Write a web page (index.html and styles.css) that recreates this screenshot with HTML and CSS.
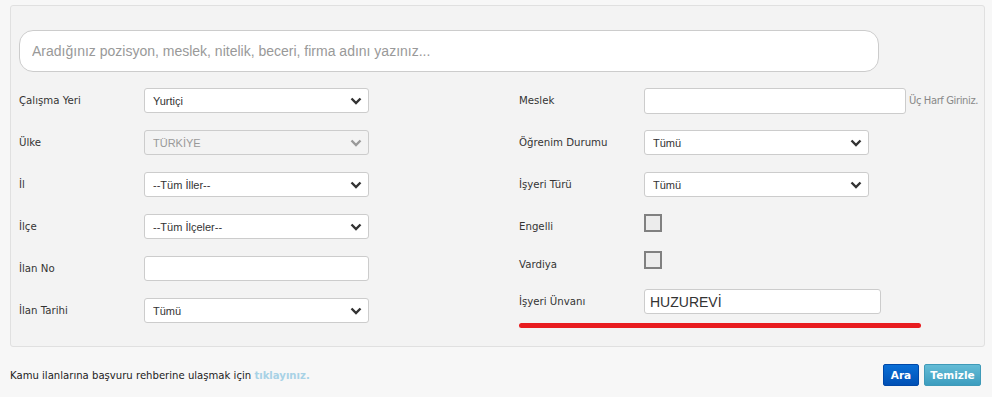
FILE: index.html
```html
<!DOCTYPE html>
<html lang="tr">
<head>
    <meta charset="UTF-8">
    <title>İş İlanları Arama</title>
    <link rel="stylesheet" href="styles.css">
</head>
<body>
    <div class="panel">
        <input class="search" type="text" placeholder="Aradığınız pozisyon, meslek, nitelik, beceri, firma adını yazınız...">

        <div class="form-grid">
            <div class="column">
                <div class="row">
                    <label>Çalışma Yeri</label>
                    <div class="select-wrap">
                        <select><option>Yurtiçi</option></select>
                        <svg class="chevron" viewBox="0 0 12 8"><polyline points="1.5,1.5 6,6 10.5,1.5"/></svg>
                    </div>
                </div>
                <div class="row">
                    <label>Ülke</label>
                    <div class="select-wrap disabled">
                        <select disabled><option>TÜRKİYE</option></select>
                        <svg class="chevron" viewBox="0 0 12 8"><polyline points="1.5,1.5 6,6 10.5,1.5"/></svg>
                    </div>
                </div>
                <div class="row">
                    <label>İl</label>
                    <div class="select-wrap">
                        <select><option>--Tüm İller--</option></select>
                        <svg class="chevron" viewBox="0 0 12 8"><polyline points="1.5,1.5 6,6 10.5,1.5"/></svg>
                    </div>
                </div>
                <div class="row">
                    <label>İlçe</label>
                    <div class="select-wrap">
                        <select><option>--Tüm İlçeler--</option></select>
                        <svg class="chevron" viewBox="0 0 12 8"><polyline points="1.5,1.5 6,6 10.5,1.5"/></svg>
                    </div>
                </div>
                <div class="row">
                    <label>İlan No</label>
                    <input class="text-input" type="text">
                </div>
                <div class="row">
                    <label>İlan Tarihi</label>
                    <div class="select-wrap">
                        <select><option>Tümü</option></select>
                        <svg class="chevron" viewBox="0 0 12 8"><polyline points="1.5,1.5 6,6 10.5,1.5"/></svg>
                    </div>
                </div>
            </div>

            <div class="column">
                <div class="row">
                    <label>Meslek</label>
                    <input class="text-input meslek" type="text">
                    <span class="hint">Üç Harf Giriniz.</span>
                </div>
                <div class="row">
                    <label>Öğrenim Durumu</label>
                    <div class="select-wrap">
                        <select><option>Tümü</option></select>
                        <svg class="chevron" viewBox="0 0 12 8"><polyline points="1.5,1.5 6,6 10.5,1.5"/></svg>
                    </div>
                </div>
                <div class="row">
                    <label>İşyeri Türü</label>
                    <div class="select-wrap">
                        <select><option>Tümü</option></select>
                        <svg class="chevron" viewBox="0 0 12 8"><polyline points="1.5,1.5 6,6 10.5,1.5"/></svg>
                    </div>
                </div>
                <div class="row check-row">
                    <label>Engelli</label>
                    <span class="checkbox"></span>
                </div>
                <div class="row check-row vardiya">
                    <label>Vardiya</label>
                    <span class="checkbox"></span>
                </div>
                <div class="row unvan">
                    <label>İşyeri Ünvanı</label>
                    <input class="text-input unvan-input" type="text" value="HUZUREVİ">
                </div>
                <div class="red-line"></div>
            </div>
        </div>
    </div>

    <div class="footer">
        <p class="guide">Kamu ilanlarına başvuru rehberine ulaşmak için <a href="#">tıklayınız.</a></p>
        <div class="buttons">
            <button class="btn btn-search">Ara</button>
            <button class="btn btn-clear">Temizle</button>
        </div>
    </div>
</body>
</html>
```

FILE: styles.css
```css
body {
    margin: 0;
    background-color: #f7f7f7;
    font-family: 'DejaVu Sans', Verdana, sans-serif;
    font-size: 11px;
    color: #333;
}

.panel {
    margin: 5px 7px 0 10px;
    padding: 24px 8px 18px 8px;
    background-color: #f3f3f3;
    border: 1px solid #e0e0e0;
    border-radius: 3px;
}

.search {
    display: block;
    box-sizing: border-box;
    width: 860px;
    height: 42px;
    padding: 0 12px;
    border: 1px solid #cccccc;
    border-radius: 14px;
    background: white;
    font-family: 'Liberation Sans', Arial, sans-serif;
    font-size: 14px;
    color: #333;
    outline: none;
}

.search::placeholder {
    color: #999;
}

.form-grid {
    display: grid;
    grid-template-columns: 500px 1fr;
    margin-top: 16px;
}

.column {
    display: flex;
    flex-direction: column;
    gap: 17px;
}

.row {
    display: flex;
    align-items: center;
    height: 25px;
}

.row label {
    width: 125px;
    flex-shrink: 0;
    font-size: 10.2px;
    color: #333;
}

.select-wrap {
    position: relative;
    width: 225px;
    height: 25px;
}

.select-wrap select {
    appearance: none;
    -webkit-appearance: none;
    box-sizing: border-box;
    width: 100%;
    height: 100%;
    padding: 0 8px;
    border: 1px solid #cccccc;
    border-radius: 3px;
    background: white;
    font-family: 'Liberation Sans', Arial, sans-serif;
    font-size: 11px;
    color: #333;
}

.select-wrap.disabled select {
    background: #f3f3f3;
    color: #999;
    opacity: 1;
}

.chevron {
    position: absolute;
    right: 7px;
    top: 9px;
    width: 12px;
    height: 8px;
    fill: none;
    stroke: #333;
    stroke-width: 2.4;
    pointer-events: none;
}

.select-wrap.disabled .chevron {
    stroke: #999;
}

.text-input {
    box-sizing: border-box;
    width: 225px;
    height: 25px;
    padding: 0 5px;
    border: 1px solid #cccccc;
    border-radius: 3px;
    background: white;
    font-family: 'Liberation Sans', Arial, sans-serif;
    font-size: 14px;
    color: #333;
}

.text-input.meslek {
    width: 262px;
    height: 26px;
}

.hint {
    margin-left: 3px;
    font-size: 10px;
    color: #888;
    letter-spacing: -0.4px;
    white-space: nowrap;
}

.check-row {
    height: 18px;
}

.check-row label {
    margin-top: 7px;
}

.check-row.vardiya {
    margin-top: 2px;
}

.check-row.vardiya label {
    margin-top: 9px;
}

.checkbox {
    box-sizing: border-box;
    width: 18px;
    height: 18px;
    border: 2px solid #808080;
    background: #ececec;
}

.unvan {
    margin-top: 3px;
}

.unvan-input {
    width: 237px;
}

.red-line {
    width: 402px;
    height: 5px;
    margin-top: -8px;
    border-radius: 3px;
    background-color: #e81c1f;
}

.footer {
    display: flex;
    justify-content: space-between;
    align-items: center;
    margin: 17px 11px 0 10px;
}

.guide {
    margin: 0;
    font-size: 10.1px;
    color: #222;
}

.guide a {
    color: #a8d2e6;
    font-weight: bold;
    text-decoration: none;
}

.buttons {
    display: flex;
    gap: 5px;
}

.btn {
    height: 22px;
    padding: 0;
    border-radius: 2px;
    font-family: 'DejaVu Sans', Verdana, sans-serif;
    font-size: 10.5px;
    font-weight: bold;
    color: white;
    cursor: pointer;
}

.btn-search {
    width: 36px;
    border: 1px solid #0048a8;
    background: linear-gradient(#0a6fd6, #0050b5);
}

.btn-clear {
    width: 57px;
    border: 1px solid #3f9ab8;
    background: linear-gradient(#64bcd6, #3c9dbf);
}
```
